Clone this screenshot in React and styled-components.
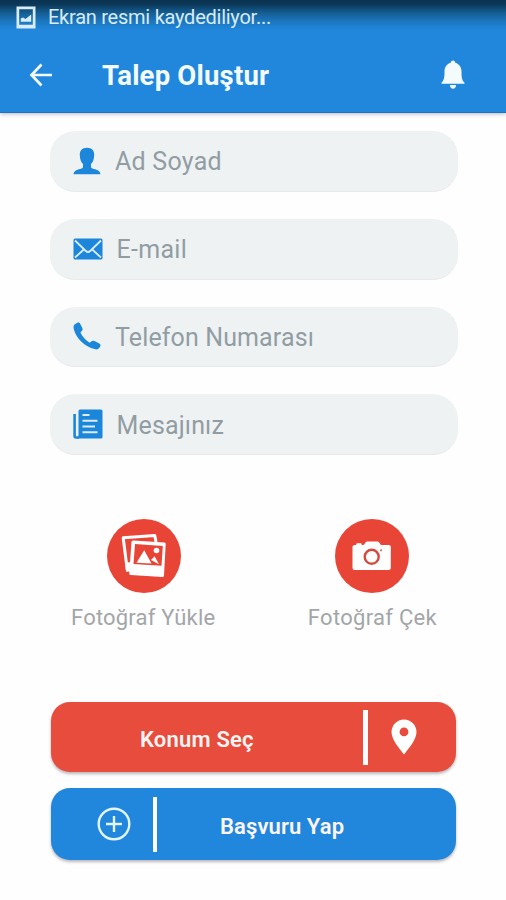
import React from "react"
import styled, { createGlobalStyle } from "styled-components"

const GlobalStyle = createGlobalStyle`
  * {
    box-sizing: border-box;
  }

  body {
    margin: 0;
    background: #fefefe;
    font-family: Roboto, "Liberation Sans", sans-serif;
  }
`

const Screen = styled("main")`
  width: 506px;
  height: 900px;
  overflow: hidden;
  background: #fefefe;
`

const Header = styled("header")`
  height: 113px;
  background: linear-gradient(
    #0a3350 0,
    #0b3756 4px,
    #155e94 13px,
    #1d78c1 22px,
    #2087dc 30px
  );
  border-bottom: 1px solid #1976bd;
  box-shadow: 0 1px 4px rgba(60, 50, 80, 0.35);
`

const StatusBar = styled("div")`
  display: flex;
  align-items: center;
  height: 36px;
  padding: 0 0 2px 16px;
  gap: 12px;
  color: #d9ebf5;
`

const StatusText = styled("span")`
  font-size: 20px;
  line-height: 24px;
  letter-spacing: -0.25px;
`

const Toolbar = styled("div")`
  display: flex;
  align-items: center;
  height: 76px;
  padding: 2px 41px 0 29px;
  color: #f4fbfd;
`

const Title = styled("h1")`
  flex: 1;
  margin: 1px 0 0 49px;
  font-size: 27.5px;
  line-height: 32px;
  font-weight: 700;
  letter-spacing: 0.2px;
`

const Form = styled("form")`
  display: flex;
  flex-direction: column;
  gap: 27px;
  padding: 18px 48px 0 50px;
`

const Field = styled("label")`
  display: flex;
  align-items: center;
  height: 60.75px;
  padding-left: 23px;
  border-radius: 25px;
  background: #eef2f3;
  border-bottom: 1px solid #e6eaec;
  color: #1c86da;
`

const Placeholder = styled("span")`
  margin: 3px 0 0 ${p => p.$gap}px;
  color: #929da3;
  font-size: 25px;
  line-height: 30px;
  letter-spacing: ${p => p.$spacing}px;
`

const PhotoRow = styled("section")`
  display: flex;
  justify-content: space-between;
  padding: 64px 69px 0 71px;
`

const PhotoAction = styled("div")`
  display: flex;
  flex-direction: column;
  align-items: center;
  gap: 11px;
  color: #a3a6a8;
  font-size: 22px;
  line-height: 28px;
  letter-spacing: ${p => p.$spacing}px;
`

const Circle = styled("div")`
  width: 74px;
  height: 74px;
  margin-left: ${p => p.$shift}px;
  border-radius: 50%;
  background: #e84537;
`

const Actions = styled("section")`
  display: flex;
  flex-direction: column;
  gap: 16px;
  padding: 70px 50px 0 51px;
`

const ActionButton = styled("button")`
  display: flex;
  align-items: center;
  height: ${p => p.$height}px;
  padding: 0 0 0 ${p => p.$left}px;
  border: 0;
  border-radius: 19px;
  background: ${p => p.$bg};
  box-shadow: 0 2px 3px rgba(60, 50, 60, 0.35);
  color: #fdf5f3;
  font-family: inherit;
  font-size: 22px;
  font-weight: 600;
  text-align: left;
`

const ActionText = styled("span")`
  width: ${p => p.$width}px;
  margin: 6px 0 0 ${p => p.$left}px;
  line-height: 26px;
  letter-spacing: ${p => p.$spacing}px;
  white-space: nowrap;
`

const Divider = styled("i")`
  width: ${p => p.$width}px;
  height: 55px;
  margin: 1px ${p => p.$right}px 0 ${p => p.$left}px;
  background: #fff;
`

const ScreenshotIcon = () => (
  <svg width="20" height="23" viewBox="0 0 20 23">
    <path
      fill="currentColor"
      fillRule="evenodd"
      d="M.5.500h19v22H.5zM3.200 3.200v15.600h13.600V3.200z"
    />
    <path
      fill="currentColor"
      d="M4.800 15.800v-3.300l2.200-1 2.500 1.500 2.500-2 3.200-2.500v7.300z"
    />
  </svg>
)

const BackIcon = () => (
  <svg width="24" height="24" viewBox="0 0 24 24">
    <path
      d="M12.500 1.500 2.500 12l10 10.500M2.500 12H23"
      fill="none"
      stroke="currentColor"
      strokeWidth="2.700"
    />
  </svg>
)

const BellIcon = () => (
  <svg width="24" height="30" viewBox="0 0 24 30">
    <path
      fill="currentColor"
      d="M12 .5c1.500 0 2.200 1.100 2.300 2.300 4 1.400 6.200 4.500 6.200 8.700 0 6 .3 8.500 3 11.300v1H.5v-1c2.700-2.800 3-5.300 3-11.300 0-4.200 2.200-7.300 6.200-8.700C9.800 1.600 10.500.5 12 .5zM8.800 25h6.400c-.3 2.200-1.500 3.700-3.200 3.700s-2.900-1.500-3.200-3.700z"
    />
  </svg>
)

const PersonIcon = () => (
  <svg width="28" height="28" viewBox="0 0 28 28">
    <path
      fill="currentColor"
      d="M14 .8c5.200 0 7.400 3 7.200 7.400-.2 4-1.200 6.800-3.200 8.800v2.800c0 1.400 1 1.700 2.700 2.100 4.300.8 6.300 2 6.800 5.300H.5c.5-3.300 2.500-4.500 6.800-5.300 1.700-.4 2.700-.7 2.700-2.100V17c-2-2-3-4.800-3.200-8.800C6.600 3.800 8.800.8 14 .8z"
    />
  </svg>
)

const MailIcon = () => (
  <svg width="30" height="22" viewBox="0 0 30 22">
    <rect x=".5" y=".5" width="29" height="21" rx="1.500" fill="currentColor" />
    <path
      d="M2 2.500 12.800 13c1.600 1.500 2.800 1.500 4.400 0L28 2.500M2 19.500l8.800-8M28 19.500l-8.800-8"
      fill="none"
      stroke="#dcecf7"
      strokeWidth="1.800"
    />
  </svg>
)

const PhoneIcon = () => (
  <svg width="28" height="28" viewBox="0 0 28 28">
    <path
      fill="currentColor"
      d="M1.500 2.500 4 1c1.300-.8 2.600-.3 3.300 1l2 4c.6 1.300.3 2.400-.8 3.200L7.500 10.500c1.500 3.800 5.500 8 9.300 10.200l1.500-1.200c1-.8 2-.9 3.200-.4l4.800 2.400c1.300.8 1.600 1.900.8 3.200l-1.200 1.500c-.8 1.100-2.300 1.500-4.200.9C11.800 24.500 3.200 16.500.9 7.500.4 5.400.3 3.700 1.500 2.500z"
    />
  </svg>
)

const MessageIcon = () => (
  <svg width="30" height="30" viewBox="0 0 30 30">
    <path
      d="M1.600 5v22q0 1.500 1.500 1.500h3"
      fill="none"
      stroke="currentColor"
      strokeWidth="2.600"
    />
    <path
      fill="currentColor"
      d="M7 .5h21q1.500 0 1.500 1.500v26q0 1.500-1.500 1.500H3.500Q5.500 29 5.500 26V2Q5.500.5 7 .5z"
    />
    <path
      d="M9.500 6h7M9.500 11.700h15M9.500 17.500H22M9.500 23.200h15"
      stroke="#dcecf7"
      strokeWidth="2"
    />
  </svg>
)

const PhotosIcon = () => (
  <svg width="74" height="74" viewBox="0 0 74 74">
    <path
      d="m49 23-1.200-6.500-31.600 2.300 4 31.700H23"
      fill="none"
      stroke="#fff"
      strokeWidth="3"
      strokeLinejoin="round"
    />
    <path d="m18.500 43.500 4.500-.3v9.300l-4 .2z" fill="#fff" />
    <path
      fill="#fff"
      fillRule="evenodd"
      d="m26 21.500 31.500 2q1.300.2 1.200 1.500L57 56.500q-.2 1.500-1.500 1.500l-32-2q-1.400-.2-1.300-1.500l2.300-31.500q.2-1.500 1.500-1.500zM28 25l-1.500 20 28 1.700L55.800 27z"
    />
    <path
      fill="#fff"
      d="m29.500 43.700 7.700-12.400 7.300 13.200zM44 41l3.600-3.800 4.400 8z"
    />
    <circle cx="49.500" cy="31.500" r="2.800" fill="#fff" />
  </svg>
)

const CameraIcon = () => (
  <svg width="74" height="74" viewBox="0 0 74 74">
    <path
      fill="#fff"
      d="M19.500 26h1.700v-.8q0-1 1-1h3.500q1 0 1 1v.8h1.500c1.500 0 2-3.500 4-3.500h10.300c2 0 2.500 3.500 4 3.500h7.300q2 0 2 2v21q0 2-2 2H19.500q-2 0-2-2V28q0-2 2-2z"
    />
    <circle
      cx="36.700"
      cy="37.800"
      r="7"
      fill="none"
      stroke="#d9483e"
      strokeWidth="2.400"
    />
    <path d="m45.300 30.800 1.300-.8v2.200h-1.300z" fill="#9c3a35" />
  </svg>
)

const PinIcon = () => (
  <svg width="26" height="36" viewBox="0 0 26 36">
    <path
      fill="#fff"
      fillRule="evenodd"
      d="M13 .5c7 0 12.500 5.600 12.500 12.500C25.500 20.500 18 29 13 35.500 8 29 .5 20.500.5 13 .5 6.100 6 .5 13 .5zm0 8a4.400 4.400 0 1 0 0 8.800 4.400 4.400 0 0 0 0-8.800z"
    />
  </svg>
)

const PlusIcon = () => (
  <svg width="34" height="34" viewBox="0 0 34 34">
    <g fill="none" stroke="#e3f5fc" strokeWidth="2.400">
      <circle cx="17" cy="17" r="15.300" />
      <path d="M17 9v16M9 17h16" />
    </g>
  </svg>
)

const fields = [
  { label: "Ad Soyad", icon: PersonIcon, gap: 14, spacing: 0.25 },
  { label: "E-mail", icon: MailIcon, gap: 13.5, spacing: 0.3 },
  { label: "Telefon Numarası", icon: PhoneIcon, gap: 14, spacing: 0.12 },
  { label: "Mesajınız", icon: MessageIcon, gap: 13.5, spacing: 0.15 },
]

const App = () => (
  <>
    <GlobalStyle />
    <Screen>
      <Header>
        <StatusBar>
          <ScreenshotIcon />
          <StatusText>Ekran resmi kaydediliyor...</StatusText>
        </StatusBar>
        <Toolbar>
          <BackIcon />
          <Title>Talep Oluştur</Title>
          <BellIcon />
        </Toolbar>
      </Header>
      <Form>
        {fields.map(({ label, icon: Icon, gap, spacing }) => (
          <Field key={label}>
            <Icon />
            <Placeholder $gap={gap} $spacing={spacing}>
              {label}
            </Placeholder>
          </Field>
        ))}
      </Form>
      <PhotoRow>
        <PhotoAction $spacing={0.2}>
          <Circle $shift={2}>
            <PhotosIcon />
          </Circle>
          <span>Fotoğraf Yükle</span>
        </PhotoAction>
        <PhotoAction $spacing={0.3}>
          <Circle $shift={0}>
            <CameraIcon />
          </Circle>
          <span>Fotoğraf Çek</span>
        </PhotoAction>
      </PhotoRow>
      <Actions>
        <ActionButton $bg="#e74c3c" $height={70} $left={0}>
          <ActionText $left={89} $width={116} $spacing={0.2}>
            Konum Seç
          </ActionText>
          <Divider $width={5} $left={107} $right={23} />
          <PinIcon />
        </ActionButton>
        <ActionButton $bg="#2087dc" $height={72} $left={46}>
          <PlusIcon />
          <Divider $width={4} $left={22} $right={0} />
          <ActionText $left={63} $width={126} $spacing={0.1}>
            Başvuru Yap
          </ActionText>
        </ActionButton>
      </Actions>
    </Screen>
  </>
)

export default App
